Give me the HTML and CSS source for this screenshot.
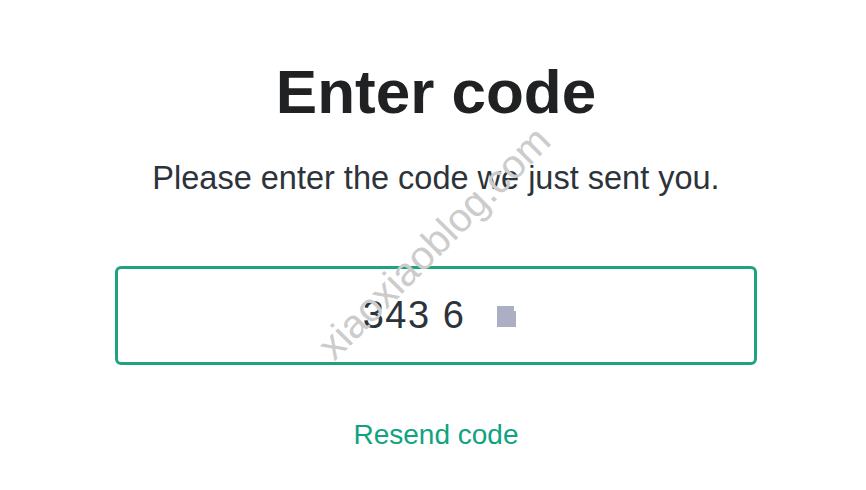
FILE: index.html
```html
<!DOCTYPE html>
<html lang="en">
  <head>
    <meta charset="UTF-8" />
    <meta name="viewport" content="width=device-width, initial-scale=1.0" />
    <title>Enter code</title>
    <link rel="stylesheet" href="styles.css">
  </head>
  <body>
    <main class="verify">
      <h1>Enter code</h1>
      <p class="subtitle">Please enter the code we just sent you.</p>
      <div class="code-box">
        <span class="code-digits">343 6</span>
        <span class="code-cursor"></span>
      </div>
      <a class="resend" href="#">Resend code</a>
    </main>
    <div class="watermark">xiaoxiaoblog.com</div>
  </body>
</html>
```

FILE: styles.css
```css
body {
  margin: 0;
  padding: 0 0 0 6px;
  background: #fff;
  font-family: "Liberation Sans", Arial, sans-serif;
  color: #2d333a;
}
.verify {
  width: 642px;
  margin: 0 auto;
  padding-top: 61px;
  display: flex;
  flex-direction: column;
  align-items: center;
}
h1 {
  margin: 0;
  font-size: 62px;
  line-height: 62px;
  font-weight: bold;
  color: #202123;
}
.subtitle {
  margin: 39px 0 0;
  font-size: 32.5px;
  line-height: 32.5px;
}
.code-box {
  box-sizing: border-box;
  width: 642px;
  height: 99px;
  margin-top: 71px;
  border: 3px solid #1fa37f;
  border-radius: 6px;
  display: flex;
  align-items: center;
  justify-content: center;
  gap: 32px;
  padding-left: 7px;
}
.code-digits {
  font-size: 38px;
  line-height: 38px;
  letter-spacing: 1.5px;
  white-space: pre;
  color: #2d333a;
}
.code-cursor {
  position: relative;
  width: 19px;
  height: 21px;
  margin-top: 2px;
  background: #acaec4;
}
.code-cursor::after {
  content: "";
  position: absolute;
  top: 0;
  right: 0;
  width: 2px;
  height: 5px;
  background: #fff;
}
.resend {
  margin-top: 56px;
  font-size: 28px;
  line-height: 28px;
  color: #10a37f;
  text-decoration: none;
}
.watermark {
  position: absolute;
  left: 434px;
  top: 243px;
  transform: translate(-50%, -50%) rotate(-45deg);
  font-family: "Liberation Sans", Arial, sans-serif;
  font-size: 40px;
  color: #cccccc;
  white-space: nowrap;
}
```
